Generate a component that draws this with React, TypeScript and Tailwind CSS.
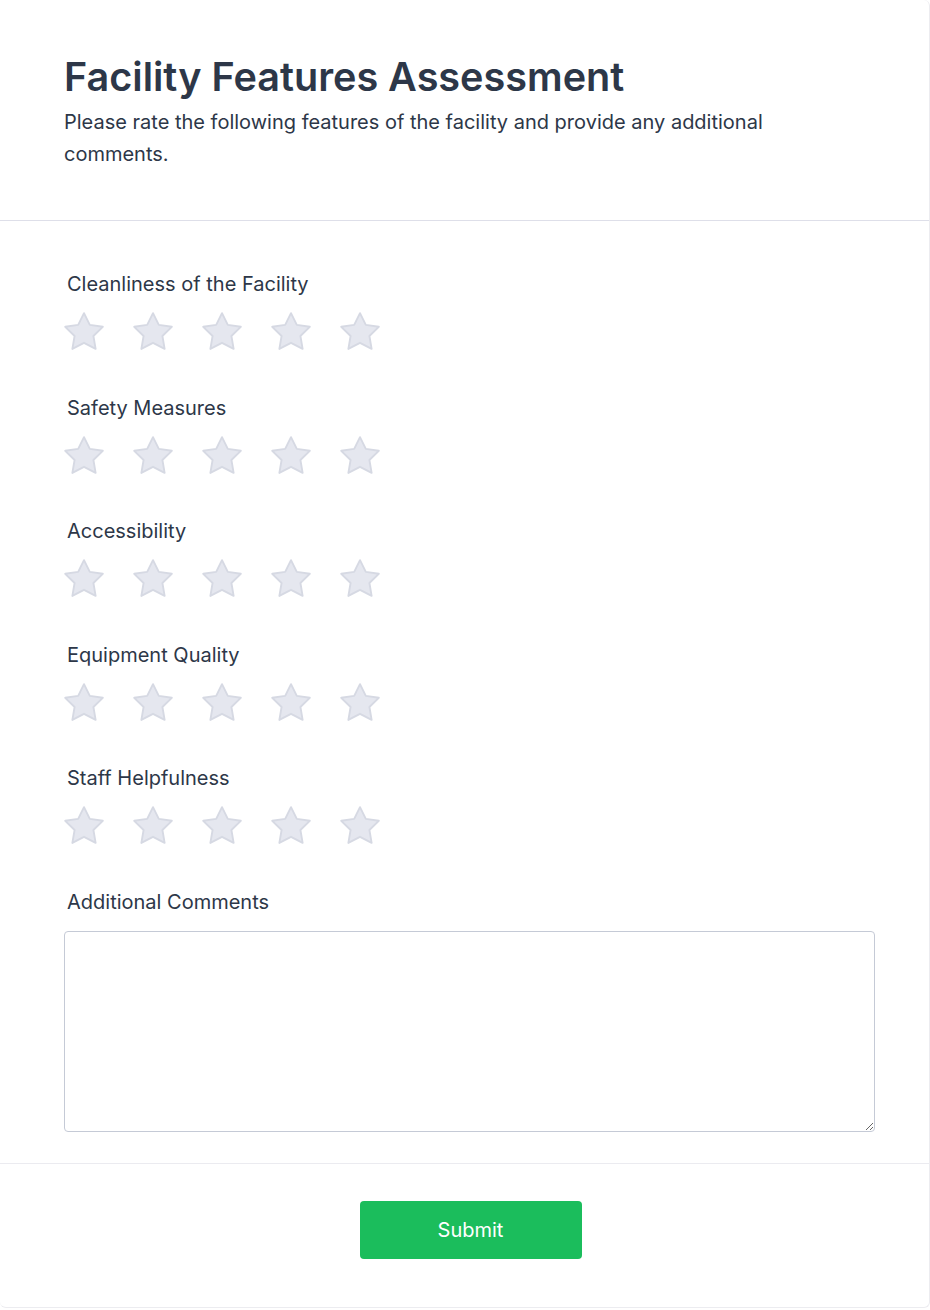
const questions = [
  'Cleanliness of the Facility',
  'Safety Measures',
  'Accessibility',
  'Equipment Quality',
  'Staff Helpfulness',
];

function StarIcon() {
  return (
    <svg
      width="40"
      height="38"
      viewBox="1.4 1.4 21.2 20.2"
      fill="#e5e7ef"
      stroke="#d6d9e3"
      strokeWidth="1"
      strokeLinejoin="round"
    >
      <path d="M12 2l3.09 6.26L22 9.27l-5 4.87 1.18 6.88L12 17.77l-6.18 3.25L7 14.14 2 9.27l6.91-1.01L12 2z" />
    </svg>
  );
}

function RatingRow({ label }: { label: string }) {
  return (
    <div>
      <p className="pl-[3px] text-xl leading-7 text-[#2d3748]">{label}</p>
      <div className="mt-[14px] flex gap-[29px]">
        {[1, 2, 3, 4, 5].map((n) => (
          <button key={n} type="button" className="block" aria-label={`${n} stars`}>
            <StarIcon />
          </button>
        ))}
      </div>
    </div>
  );
}

export default function App() {
  return (
    <div className="min-h-screen bg-white" style={{ fontFamily: 'Inter, "Noto Sans", sans-serif' }}>
      <div className="w-[930px] rounded-md border-r border-b border-[#ececf0] bg-white">
        <header className="border-b border-[#dedfe9] pt-[53px] pb-[50px] pl-16 pr-[54px]">
          <h1 className="text-[39.6px] leading-[48px] font-semibold text-[#2d3748]">
            Facility Features Assessment
          </h1>
          <p className="mt-[5px] max-w-3xl text-xl leading-8 text-[#2d3748]">
            Please rate the following features of the facility and provide any additional comments.
          </p>
        </header>

        <section className="pt-[49px] pb-[31px] pl-16 pr-[54px]">
          <div className="flex flex-col gap-[43.6px]">
            {questions.map((q) => (
              <RatingRow key={q} label={q} />
            ))}
            <div>
              <p className="pl-[3px] text-xl leading-7 text-[#2d3748]">
                Additional Comments
              </p>
              <textarea
                className="mt-[15px] block h-[201px] w-full rounded border border-[#c5cad6] p-3 text-base text-[#2d3748] outline-none"
              />
            </div>
          </div>
        </section>

        <footer className="flex justify-center border-t border-[#ebebf0] pt-[37px] pb-[48px] pl-16 pr-[52px]">
          <button
            type="button"
            className="h-[58px] w-[222px] rounded bg-[#1bbd5c] text-xl text-white"
          >
            Submit
          </button>
        </footer>
      </div>
    </div>
  );
}
